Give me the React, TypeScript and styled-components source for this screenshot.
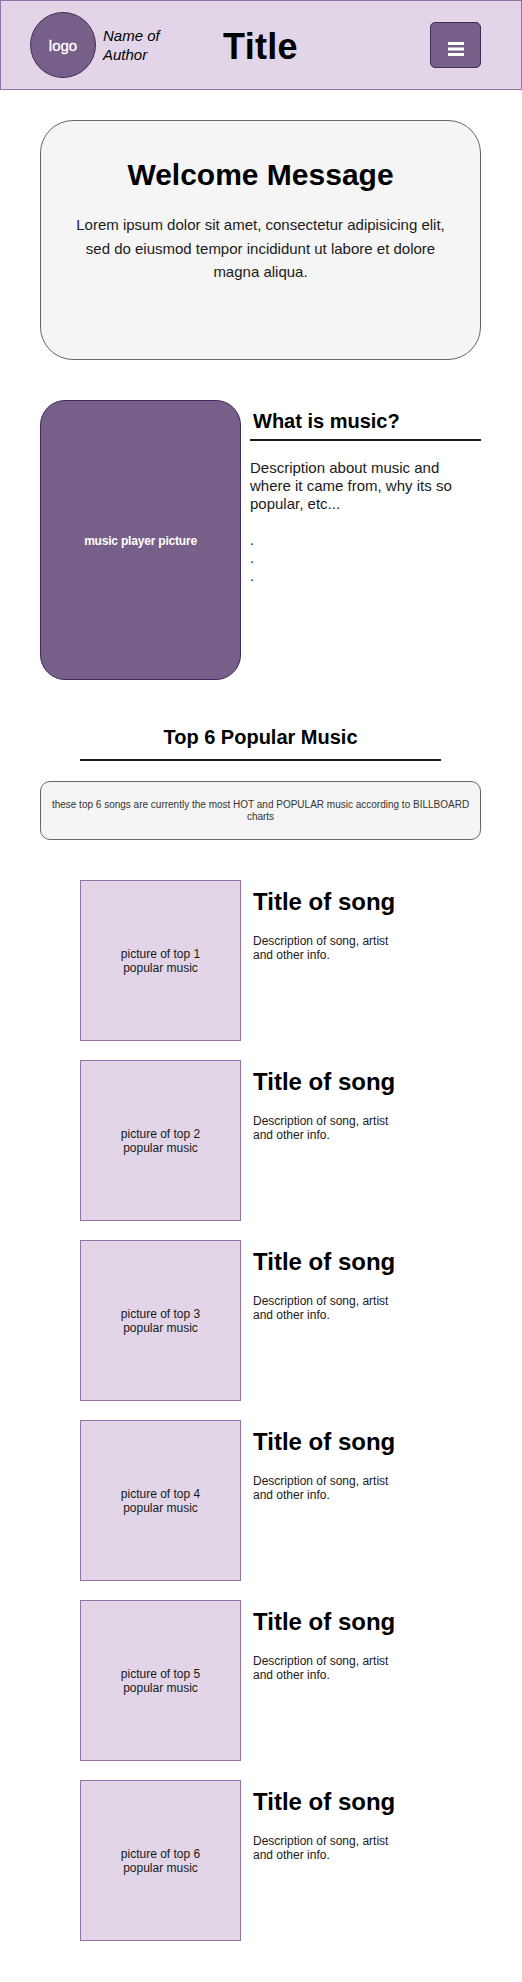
import React from "react";
import styled, { createGlobalStyle } from "styled-components";

const GlobalStyle = createGlobalStyle`
  html, body { margin: 0; padding: 0; background: #ffffff; }
  body { font-family: "Liberation Sans", Arial, sans-serif; color: #000; }
  * { box-sizing: border-box; }
`;

const Page = styled.div`
  width: 522px;
  padding-bottom: 41px;
`;

const Header = styled.header`
  height: 90px;
  background: #e1d5e7;
  border: 1px solid #9673a6;
  display: flex;
  align-items: center;
  padding-left: 29px;
`;

const Logo = styled.div`
  width: 66px;
  height: 66px;
  border-radius: 50%;
  background: #76608a;
  border: 1px solid #432d57;
  color: #fff;
  font-size: 15px;
  display: flex;
  align-items: center;
  justify-content: center;
  flex-shrink: 0;
  -webkit-text-stroke: 0.3px #fff;
`;

const Author = styled.div`
  margin-left: 7px;
  width: 120px;
  font-style: italic;
  font-size: 15px;
  line-height: 19px;
  color: #000;
`;

const Title = styled.h1`
  margin: 4px 0 0;
  font-size: 36px;
  font-weight: 700;
  line-height: 40px;
  width: 207px;
  letter-spacing: 0.3px;
`;

const MenuButton = styled.button`
  width: 51px;
  height: 46px;
  background: #76608a;
  border: 1px solid #432d57;
  border-radius: 5px;
  display: flex;
  align-items: center;
  justify-content: center;
  padding: 0;
`;

const MenuGlyph = styled.svg`
  margin-top: 7px;
  display: block;
`;

const Main = styled.main`
  padding: 30px 41px 0 40px;
  display: flex;
  flex-direction: column;
`;

const WelcomeCard = styled.section`
  height: 240px;
  background: #f5f5f5;
  border: 1px solid #666666;
  border-radius: 33px;
  padding: 37px 26px 0;
  text-align: center;
`;

const WelcomeTitle = styled.h2`
  margin: 0;
  font-size: 30px;
  line-height: 34px;
  font-weight: 700;
`;

const WelcomeText = styled.p`
  margin: 21px 0 0;
  font-size: 15px;
  line-height: 23.5px;
  color: #1a1a1a;
`;

const MusicSection = styled.section`
  margin-top: 40px;
  display: flex;
  gap: 9px;
`;

const PlayerPicture = styled.div`
  width: 201px;
  height: 280px;
  flex-shrink: 0;
  background: #76608a;
  border: 1px solid #432d57;
  border-radius: 25px;
  color: #fff;
  font-size: 12px;
  font-weight: 700;
  display: flex;
  align-items: center;
  justify-content: center;
  letter-spacing: -0.2px;
  padding-top: 2px;
`;

const MusicText = styled.div`
  flex: 1;
  padding-top: 10px;
`;

const SectionHeading = styled.h3`
  margin: 0;
  padding: 0 0 6px 3px;
  font-size: 20px;
  line-height: 23px;
  font-weight: 700;
  border-bottom: 2px solid #1a1a1a;
`;

const MusicDesc = styled.p`
  margin: 18px 0 0;
  font-size: 15px;
  line-height: 18px;
  color: #1a1a1a;
  white-space: pre-line;
`;

const TopHeading = styled.h2`
  margin: 46px 40px 0;
  padding-bottom: 10px;
  text-align: center;
  font-size: 20px;
  line-height: 23px;
  font-weight: 700;
  border-bottom: 2px solid #1a1a1a;
`;

const InfoBox = styled.div`
  margin-top: 20px;
  height: 59px;
  background: #f5f5f5;
  border: 1px solid #666666;
  border-radius: 10px;
  padding: 1px 10px 0;
  display: flex;
  align-items: center;
  justify-content: center;
  text-align: center;
  font-size: 10px;
  line-height: 12px;
  color: #333333;
`;

const SongList = styled.div`
  margin-top: 40px;
  padding-left: 40px;
  display: flex;
  flex-direction: column;
  gap: 19px;
`;

const SongRow = styled.div`
  display: flex;
  gap: 12px;
`;

const SongPicture = styled.div`
  width: 161px;
  height: 161px;
  flex-shrink: 0;
  background: #e1d5e7;
  border: 1px solid #9673a6;
  display: flex;
  align-items: center;
  justify-content: center;
  text-align: center;
  font-size: 12px;
  line-height: 14px;
  color: #1a1a1a;
  padding: 0 30px;
`;

const SongInfo = styled.div`
  width: 150px;
  padding-top: 8px;
`;

const SongTitle = styled.h4`
  margin: 0;
  font-size: 24px;
  line-height: 28px;
  font-weight: 700;
`;

const SongDesc = styled.p`
  margin: 19px 0 0;
  font-size: 12px;
  line-height: 13.5px;
  color: #1a1a1a;
`;

const MenuIcon = () => (
  <MenuGlyph width="16" height="14" viewBox="0 0 16 14" aria-hidden="true">
    <rect x="0" y="0" width="16" height="3" fill="#fff" />
    <rect x="0" y="5.5" width="16" height="3" fill="#fff" />
    <rect x="0" y="11" width="16" height="3" fill="#fff" />
  </MenuGlyph>
);

export default function App() {
  const songs = [1, 2, 3, 4, 5, 6];
  return (
    <Page>
      <GlobalStyle />
      <Header>
        <Logo>logo</Logo>
        <Author>
          Name of
          <br />
          Author
        </Author>
        <Title>Title</Title>
        <MenuButton aria-label="menu">
          <MenuIcon />
        </MenuButton>
      </Header>
      <Main>
        <WelcomeCard>
          <WelcomeTitle>Welcome Message</WelcomeTitle>
          <WelcomeText>
            Lorem ipsum dolor sit amet, consectetur adipisicing elit, sed do eiusmod tempor
            incididunt ut labore et dolore magna aliqua.
          </WelcomeText>
        </WelcomeCard>
        <MusicSection>
          <PlayerPicture>music player picture</PlayerPicture>
          <MusicText>
            <SectionHeading>What is music?</SectionHeading>
            <MusicDesc>
              {"Description about music and where it came from, why its so popular, etc...\n\n.\n.\n."}
            </MusicDesc>
          </MusicText>
        </MusicSection>
        <TopHeading>Top 6 Popular Music</TopHeading>
        <InfoBox>
          these top 6 songs are currently the most HOT and POPULAR music according to BILLBOARD charts
        </InfoBox>
        <SongList>
          {songs.map((n) => (
            <SongRow key={n}>
              <SongPicture>picture of top {n} popular music</SongPicture>
              <SongInfo>
                <SongTitle>Title of song</SongTitle>
                <SongDesc>Description of song, artist and other info.</SongDesc>
              </SongInfo>
            </SongRow>
          ))}
        </SongList>
      </Main>
    </Page>
  );
}
